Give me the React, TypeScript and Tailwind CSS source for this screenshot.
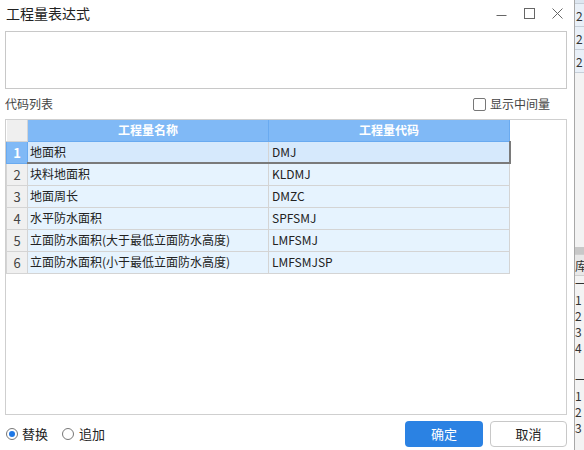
export default function App() {
  const rows = [
    ["地面积", "DMJ"],
    ["块料地面积", "KLDMJ"],
    ["地面周长", "DMZC"],
    ["水平防水面积", "SPFSMJ"],
    ["立面防水面积(大于最低立面防水高度)", "LMFSMJ"],
    ["立面防水面积(小于最低立面防水高度)", "LMFSMJSP"],
  ];

  return (
    <div
      className="flex w-[584px] h-[450px] overflow-hidden bg-white text-[#333]"
      style={{ fontFamily: '"Noto Sans CJK SC", "Microsoft YaHei", sans-serif' }}
    >
      {/* Dialog */}
      <div className="flex flex-col w-[575px] h-full bg-white border-r border-[#a8a8a8]">
        {/* Title bar */}
        <div className="flex items-center justify-between h-[26px] pl-[6px] pr-[11px]">
          <span className="text-[14px] leading-none text-[#222]">工程量表达式</span>
          <div className="flex items-center gap-[17px] text-[#555]">
            <svg width="11" height="11" viewBox="0 0 11 11">
              <path d="M0.5 7.5h10" stroke="#666" strokeWidth="1" />
            </svg>
            <svg width="11" height="11" viewBox="0 0 11 11">
              <rect x="0.5" y="0.5" width="10" height="10" fill="none" stroke="#666" strokeWidth="1" />
            </svg>
            <svg width="11" height="11" viewBox="0 0 11 11">
              <path d="M0.5 0.5l10 10M10.5 0.5l-10 10" stroke="#666" strokeWidth="1" />
            </svg>
          </div>
        </div>

        {/* Expression box */}
        <div className="mt-[5px] ml-[5px] w-[562px] h-[58px] border border-[#c8c8c8] bg-white" />

        {/* Code list header */}
        <div className="flex items-center justify-between ml-[5px] w-[562px] h-[30px]">
          <span className="text-[12px] text-[#444]">代码列表</span>
          <label className="flex items-center gap-[4px] mr-[17px] text-[12px] text-[#444]">
            <span className="w-[13px] h-[13px] border border-[#777] rounded-[2px] bg-white" />
            显示中间量
          </label>
        </div>

        {/* Table container */}
        <div className="ml-[5px] w-[562px] h-[296px] border border-[#cfcfcf] bg-white">
          <table className="border-collapse text-[12px] leading-none table-fixed">
            <thead>
              <tr className="h-[21px]">
                <th className="w-[21px] bg-[#efefef] border-r border-b border-[#d4d4d4]" />
                <th className="w-[241px] bg-[#80b9f6] border border-t-0 border-[#69aaf0] text-white font-bold">
                  工程量名称
                </th>
                <th className="w-[241px] bg-[#80b9f6] border border-t-0 border-[#69aaf0] text-white font-bold">
                  工程量代码
                </th>
              </tr>
            </thead>
            <tbody>
              {rows.map(([name, code], i) => {
                const sel = i === 0;
                return (
                  <tr key={i} className="h-[22px]">
                    <td
                      className={
                        sel
                          ? "text-center text-[13px] bg-[#80b9f6] text-white font-bold border border-[#69aaf0]"
                          : "text-center text-[13px] bg-[#f0f0f0] text-[#444] border border-[#d4d4d4]"
                      }
                    >
                      {i + 1}
                    </td>
                    <td
                      className={
                        sel
                          ? "pl-[2px] bg-[#d6e9fc] text-[#222] border-r border-[#d4d4d4] border-b-2 border-b-[#7a7a7a]"
                          : "pl-[2px] bg-[#e6f3fe] text-[#222] border border-[#d4d4d4]"
                      }
                    >
                      {name}
                    </td>
                    <td
                      className={
                        sel
                          ? "pl-[3px] bg-[#d6e9fc] text-[#222] border-r-2 border-r-[#7a7a7a] border-b-2 border-b-[#7a7a7a]"
                          : "pl-[3px] bg-[#e6f3fe] text-[#222] border border-[#d4d4d4]"
                      }
                    >
                      {code}
                    </td>
                  </tr>
                );
              })}
            </tbody>
          </table>
        </div>

        {/* Footer */}
        <div className="flex items-center justify-between ml-[5px] w-[562px] mt-[6px]">
          <div className="flex items-center text-[13px] text-[#222]">
            <span className="flex items-center justify-center w-[12px] h-[12px] ml-[1px] rounded-full border border-[#777] bg-white">
              <span className="w-[6px] h-[6px] rounded-full bg-[#1e78e6]" />
            </span>
            <span className="ml-[4px]">替换</span>
            <span className="w-[12px] h-[12px] ml-[14px] rounded-full border border-[#777] bg-white" />
            <span className="ml-[5px]">追加</span>
          </div>
          <div className="flex gap-[7px]">
            <button className="w-[78px] h-[26px] rounded-[4px] bg-[#2b82e3] text-white text-[13px]">
              确定
            </button>
            <button className="w-[77px] h-[26px] rounded-[4px] bg-white border border-[#c8c8c8] text-[#222] text-[13px]">
              取消
            </button>
          </div>
        </div>
      </div>

      {/* Background app strip */}
      <div className="flex flex-col w-[9px] h-full bg-[#f3f3f3] text-[12px] leading-none text-[#333] overflow-hidden">
        <div className="h-[4px] bg-[#dde6f0] border-b border-[#c6cfd9]" />
        {["2", "2", "2"].map((t, i) => (
          <div key={i} className="h-[23px] pl-[1px] pt-[6px] bg-[#e9f0f8] border-b border-[#c6cfd9]">
            {t}
          </div>
        ))}
        <div className="h-[174px]" />
        <div className="h-[7px] bg-[#c8c8c8]" />
        <div className="h-[22px] pt-[5px] bg-[#e8e8e8] border-y border-[#cfcfcf]">库</div>
        {["一", "1", "2", "3", "4", "", "一", "1", "2", "3"].map((t, i) => (
          <div key={i} className="h-[16px] pt-[2px]">
            {t}
          </div>
        ))}
      </div>
    </div>
  );
}
